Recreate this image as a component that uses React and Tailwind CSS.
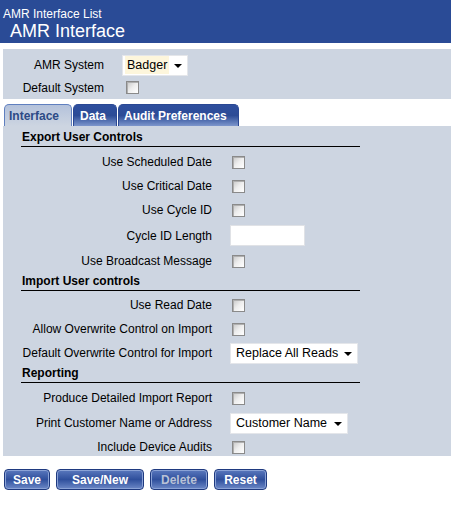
const font = { fontFamily: '"Liberation Sans", Arial, sans-serif' }

function Check() {
  return (
    <span className="block w-[13px] h-[13px] border border-[#8a8a8a] bg-gradient-to-br from-[#c8c8c8] via-[#eeeeee] to-white shadow-[inset_1px_1px_0_#b0b0b0]" />
  )
}

function Select({ value, width, hl }) {
  return (
    <div
      className="relative flex items-center h-[21px] bg-white border border-[#e4e6ea] pl-[2px] text-[12.5px] text-black"
      style={{ width }}
    >
      <span className={hl ? 'bg-[#fdf6dc] px-[2px]' : 'px-[3px]'}>{value}</span>
      <span className="absolute right-[5px] top-[8px] w-0 h-0 border-l-[4px] border-r-[4px] border-t-[4px] border-l-transparent border-r-transparent border-t-black" />
    </div>
  )
}

function Row({ label, children, h = 24 }) {
  return (
    <div className="flex items-center" style={{ height: h }}>
      <div className="w-[209px] text-right text-[12px] text-black">{label}</div>
      <div className="pl-[20px] flex items-center">{children}</div>
    </div>
  )
}

function Heading({ children, h = 18 }) {
  return (
    <div
      className="ml-[18px] w-[339px] border-b border-black flex items-end pb-[2px] pl-[1px] text-[12px] leading-[14px] font-bold text-black"
      style={{ height: h }}
    >
      {children}
    </div>
  )
}

function Btn({ children, w, disabled }) {
  return (
    <button
      className={`h-[21px] rounded-[4px] border border-[#1f3a80] bg-gradient-to-b from-[#5a78bd] via-[#2f4f9c] to-[#6d88c6] text-[12px] font-bold shadow-[inset_0_0_0_1px_#8aa2d6] ${
        disabled ? 'text-[#b9c2d6]' : 'text-white'
      }`}
      style={{ width: w }}
    >
      {children}
    </button>
  )
}

export default function App() {
  const exportRows = [
    ['Use Scheduled Date', <Check />],
    ['Use Critical Date', <Check />],
    ['Use Cycle ID', <Check />],
    ['Cycle ID Length', <div className="-ml-[2px] w-[75px] h-[21px] bg-white border border-[#e0e2e6]" />],
    ['Use Broadcast Message', <Check />],
  ]

  return (
    <div className="w-[451px] h-[510px] bg-white" style={font}>
      <div className="bg-[#2a4b96] h-[43px] text-white px-[3px] pt-[7px]">
        <div className="text-[12px] leading-[14px]">AMR Interface List</div>
        <div className="text-[18px] leading-[21px] pl-[7px]">AMR Interface</div>
      </div>

      <div className="ml-[3px] mt-[6px] bg-[#cdd5e1] h-[50px] pt-[5px]">
        <div className="flex items-center h-[22px]">
          <div className="w-[101px] text-right text-[12px]">AMR System</div>
          <div className="pl-[18px]">
            <Select value="Badger" width={66} hl />
          </div>
        </div>
        <div className="flex items-center h-[23px]">
          <div className="w-[101px] text-right text-[12px]">Default System</div>
          <div className="pl-[22px]">
            <Check />
          </div>
        </div>
      </div>

      <div className="flex ml-[4px] mt-[5px] h-[22px] items-end gap-[1px]">
        <div className="w-[68px] h-[22px] rounded-t-[5px] border border-b-0 border-[#5f7fbf] bg-gradient-to-b from-[#b4c2db] to-[#cdd5e1] text-[#2c4a86] text-[12px] font-bold flex items-center pl-[4px]">
          Interface
        </div>
        <div className="w-[44px] h-[22px] rounded-t-[5px] border border-b-0 border-[#2a4894] bg-gradient-to-b from-[#2e4f9e] via-[#2c4b96] to-[#7d96cc] text-white text-[12px] font-bold flex items-center pl-[6px]">
          Data
        </div>
        <div className="w-[121px] h-[22px] rounded-t-[5px] border border-b-0 border-[#2a4894] bg-gradient-to-b from-[#2e4f9e] via-[#2c4b96] to-[#7d96cc] text-white text-[12px] font-bold flex items-center pl-[5px]">
          Audit Preferences
        </div>
      </div>

      <div className="ml-[3px] bg-[#cdd5e1] h-[330px]">
        <Heading h={21}>Export User Controls</Heading>
        <div className="pt-[3px]">
          {exportRows.map(([l, c], i) => (
            <Row key={l} label={l} h={i === 3 ? 27 : 24}>
              {c}
            </Row>
          ))}
        </div>
        <Heading>Import User controls</Heading>
        <div className="pt-[2px]">
          <Row label="Use Read Date">
            <Check />
          </Row>
          <Row label="Allow Overwrite Control on Import">
            <Check />
          </Row>
          <Row label="Default Overwrite Control for Import">
            <div className="-ml-[2px]">
              <Select value="Replace All Reads" width={128} />
            </div>
          </Row>
        </div>
        <Heading>Reporting</Heading>
        <div className="pt-[2px]">
          <Row label="Produce Detailed Import Report" h={26}>
            <Check />
          </Row>
          <Row label="Print Customer Name or Address">
            <div className="-ml-[2px]">
              <Select value="Customer Name" width={118} />
            </div>
          </Row>
          <Row label="Include Device Audits">
            <Check />
          </Row>
        </div>
      </div>

      <div className="flex ml-[4px] mt-[13px] gap-[6px]">
        <Btn w={46}>Save</Btn>
        <Btn w={88}>Save/New</Btn>
        <Btn w={58} disabled>
          Delete
        </Btn>
        <Btn w={53}>Reset</Btn>
      </div>
    </div>
  )
}
